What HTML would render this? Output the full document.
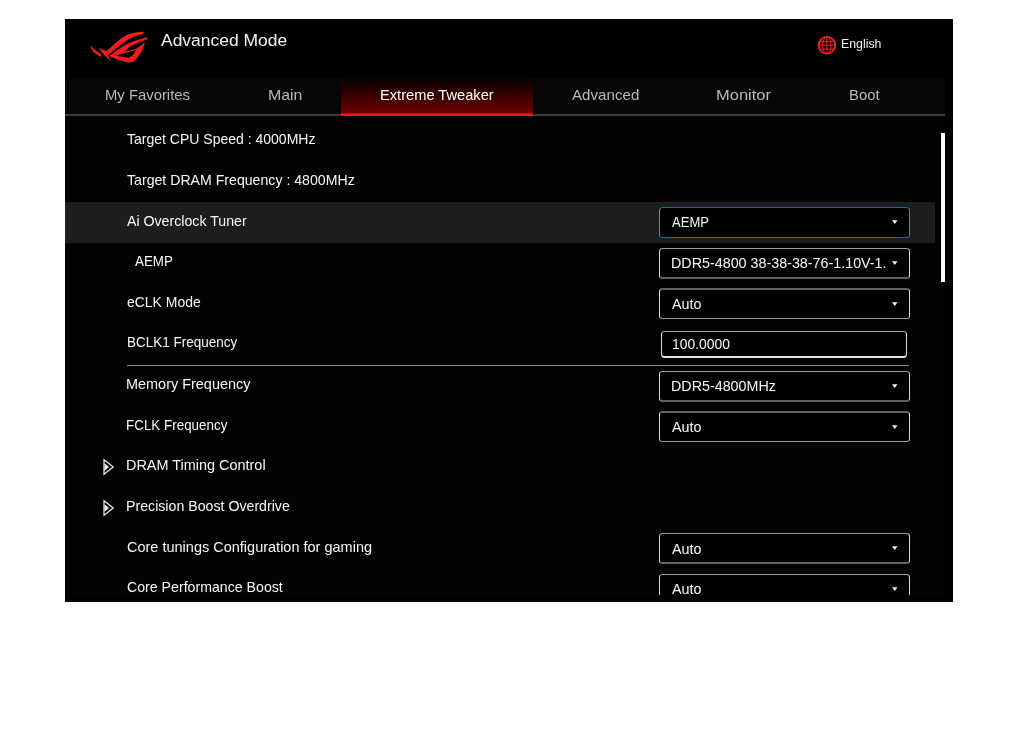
<!DOCTYPE html>
<html><head><meta charset="utf-8"><title>Advanced Mode</title>
<style>
html,body{margin:0;padding:0;background:#fff}
body{width:1024px;height:732px;position:relative;overflow:hidden;font-family:'Liberation Sans',sans-serif}
.a{position:absolute}
.t{position:absolute;white-space:pre;line-height:1;transform-origin:0 0}
.dd{position:absolute;left:659px;width:251px;height:30px;box-sizing:border-box;background:#000;
 border:1px solid #9a9a9a;border-left-color:#dcdcdc;border-right-color:#dcdcdc;border-radius:3.5px}
.dd.f{border-color:#0e6fa4;border-left-color:#1aa4d4;border-right-color:#1aa4d4}
.ar{position:absolute;left:892px;width:0;height:0;border-left:3px solid transparent;border-right:3px solid transparent;border-top:4px solid #f0f0f0}
</style></head><body>
<div class="a" style="left:65px;top:19px;width:888px;height:583px;background:#000"></div>
<div class="a" style="left:65px;top:116px;width:880px;height:480px;background:#030303"></div>
<div class="a" style="left:65px;top:77px;width:880px;height:37px;background:#060606"></div>
<div class="a" style="left:65px;top:114px;width:880px;height:2px;background:#3b3b3b"></div>
<div class="a" style="left:341px;top:77px;width:192px;height:39px;background:linear-gradient(to bottom,#060303 0%,#1c0000 22%,#420000 55%,#6c0000 92%)"></div>
<div class="a" style="left:341px;top:113px;width:192px;height:1px;background:#b00c0c"></div><div class="a" style="left:341px;top:114px;width:192px;height:2px;background:#f41818"></div>
<div class="a" style="left:65px;top:202px;width:870px;height:40.5px;background:#1d1d1d"></div>
<div class="a" style="left:941px;top:133px;width:4px;height:148.5px;background:#fff"></div>
<div class="a" style="left:127px;top:365px;width:782px;height:1px;background:#8c8c8c"></div>

<svg class="a" style="left:85px;top:25px" width="70" height="45" viewBox="0 0 1024 658">
<g fill="#f81a1a">
<path d="M312,385 C420,290 520,185 620,142 C700,115 790,105 862,100 L852,132 C760,150 680,182 610,228 C520,292 420,372 332,442 Z"/>
<path fill-rule="evenodd" d="M355,452 C470,370 560,300 640,265 C740,225 830,195 922,178 L900,212 L770,260 L665,312 L604,360 L594,388 L745,350 L862,268 L878,262 L832,380 L772,470 L702,540 L640,548 C540,525 440,490 355,452 Z M447,449 L580,410 L745,366 L705,440 L640,480 Z"/>
<path d="M200,333 L318,385 L336,446 L380,532 L282,442 Z"/>
<path d="M78,298 C125,345 180,392 244,434 L234,458 C150,432 92,372 78,298 Z"/>
</g></svg>

<svg class="a" style="left:817px;top:35px" width="20" height="20" viewBox="0 0 20 20">
<g fill="none" stroke="#f21c1c">
<circle cx="9.9" cy="10.2" r="8.35" stroke-width="1.8"/>
<ellipse cx="9.9" cy="10.2" rx="4.3" ry="8.3" stroke-width="1"/>
<path d="M9.9,1.5 V18.9 M1.5,10.2 H18.3 M2.4,6.6 H17.4 M2.4,14.1 H17.4" stroke-width="1"/>
</g></svg>

<div class="dd f" style="top:207px;height:31px;"></div>
<svg class="a" style="left:891px;top:219px" width="8" height="7"><path d="M1,1.35 L6.5,1.35 L3.75,5.1 Z" fill="#f4f4f4"/></svg>
<div class="dd" style="top:248px;height:31px;border-bottom:2px solid #626262;"></div>
<svg class="a" style="left:891px;top:260px" width="8" height="7"><path d="M1,1.35 L6.5,1.35 L3.75,5.1 Z" fill="#f4f4f4"/></svg>
<div class="dd" style="top:288px;height:31px;border-top:2px solid #626262;"></div>
<svg class="a" style="left:891px;top:301px" width="8" height="7"><path d="M1,1.35 L6.5,1.35 L3.75,5.1 Z" fill="#f4f4f4"/></svg>
<div class="dd" style="top:371px;height:31px;border-bottom:2px solid #626262;"></div>
<svg class="a" style="left:891px;top:383px" width="8" height="7"><path d="M1,1.35 L6.5,1.35 L3.75,5.1 Z" fill="#f4f4f4"/></svg>
<div class="dd" style="top:411px;height:31px;border-top:2px solid #626262;"></div>
<svg class="a" style="left:891px;top:424px" width="8" height="7"><path d="M1,1.35 L6.5,1.35 L3.75,5.1 Z" fill="#f4f4f4"/></svg>
<div class="dd" style="top:533px;height:31px;border-bottom:2px solid #626262;"></div>
<svg class="a" style="left:891px;top:545px" width="8" height="7"><path d="M1,1.35 L6.5,1.35 L3.75,5.1 Z" fill="#f4f4f4"/></svg>
<div class="dd" style="top:574px;height:31px;"></div>
<svg class="a" style="left:891px;top:586px" width="8" height="7"><path d="M1,1.35 L6.5,1.35 L3.75,5.1 Z" fill="#f4f4f4"/></svg>
<div class="a" style="left:661px;top:331px;width:246px;height:27px;box-sizing:border-box;background:#000;border:1px solid #9c9c9c;border-bottom:2px solid #e2e2e2;border-left-color:#d8d8d8;border-right-color:#d8d8d8;border-radius:3.5px"></div>
<div class="a" style="left:672px;top:250px;width:213.5px;height:26px;overflow:hidden;will-change:transform"><span class="t" id="long" style="left:-0.6px;top:5.94px;font-size:14.6px;color:#f7f7f7;transform:scaleX(0.9804)">DDR5-4800 38-38-38-76-1.10V-1.20V</span></div>
<svg class="a" style="left:101px;top:456.1px" width="16" height="22" viewBox="0 0 16 22"><path d="M3,3.7 L12.3,11 L3,18.3 Z" fill="none" stroke="#f0f0f0" stroke-width="1.2" stroke-linejoin="miter"/><path d="M3.5,7.3 L8,11 L3.5,14.7 Z" fill="#f0f0f0"/></svg>
<svg class="a" style="left:101px;top:497.0px" width="16" height="22" viewBox="0 0 16 22"><path d="M3,3.7 L12.3,11 L3,18.3 Z" fill="none" stroke="#f0f0f0" stroke-width="1.2" stroke-linejoin="miter"/><path d="M3.5,7.3 L8,11 L3.5,14.7 Z" fill="#f0f0f0"/></svg>
<div class="a" style="left:0;top:0;width:1024px;height:602px;will-change:transform">
<span class="t" style="left:160.9px;top:32.47px;font-size:17.4px;color:#f4f4f4;transform:scaleX(1.0038)">Advanced Mode</span>
<span class="t" style="left:841.4px;top:37.29px;font-size:13.6px;color:#f4f4f4;transform:scaleX(0.9071)">English</span>
<span class="t" style="left:104.7px;top:87.67px;font-size:14.8px;color:#b9b9b9;transform:scaleX(1.0033)">My Favorites</span>
<span class="t" style="left:267.7px;top:87.67px;font-size:14.8px;color:#b9b9b9;transform:scaleX(1.0717)">Main</span>
<span class="t" style="left:380.2px;top:87.67px;font-size:14.8px;color:#ffffff;transform:scaleX(0.9900)">Extreme Tweaker</span>
<span class="t" style="left:572.0px;top:87.67px;font-size:14.8px;color:#b9b9b9;transform:scaleX(1.0227)">Advanced</span>
<span class="t" style="left:716.1px;top:87.67px;font-size:14.8px;color:#b9b9b9;transform:scaleX(1.1129)">Monitor</span>
<span class="t" style="left:849.2px;top:87.67px;font-size:14.8px;color:#b9b9b9;transform:scaleX(1.0030)">Boot</span>
<span class="t" style="left:127.3px;top:132.44px;font-size:14.6px;color:#f7f7f7;transform:scaleX(0.9599)">Target CPU Speed : 4000MHz</span>
<span class="t" style="left:127.2px;top:172.94px;font-size:14.6px;color:#f7f7f7;transform:scaleX(0.9681)">Target DRAM Frequency : 4800MHz</span>
<span class="t" style="left:127.1px;top:213.64px;font-size:14.6px;color:#f7f7f7;transform:scaleX(0.9703)">Ai Overclock Tuner</span>
<span class="t" style="left:134.8px;top:253.94px;font-size:14.6px;color:#f7f7f7;transform:scaleX(0.9171)">AEMP</span>
<span class="t" style="left:126.7px;top:294.64px;font-size:14.6px;color:#f7f7f7;transform:scaleX(0.9567)">eCLK Mode</span>
<span class="t" style="left:126.5px;top:335.14px;font-size:14.6px;color:#f7f7f7;transform:scaleX(0.9248)">BCLK1 Frequency</span>
<span class="t" style="left:126.1px;top:377.14px;font-size:14.6px;color:#f7f7f7;transform:scaleX(0.9901)">Memory Frequency</span>
<span class="t" style="left:126.4px;top:417.64px;font-size:14.6px;color:#f7f7f7;transform:scaleX(0.9190)">FCLK Frequency</span>
<span class="t" style="left:126.3px;top:458.44px;font-size:14.6px;color:#f7f7f7;transform:scaleX(0.9894)">DRAM Timing Control</span>
<span class="t" style="left:126.4px;top:498.94px;font-size:14.6px;color:#f7f7f7;transform:scaleX(0.9711)">Precision Boost Overdrive</span>
<span class="t" style="left:126.5px;top:539.64px;font-size:14.6px;color:#f7f7f7;transform:scaleX(0.9936)">Core tunings Configuration for gaming</span>
<span class="t" style="left:126.7px;top:580.14px;font-size:14.6px;color:#f7f7f7;transform:scaleX(0.9699)">Core Performance Boost</span>
<span class="t" style="left:671.5px;top:215.44px;font-size:14.6px;color:#f7f7f7;transform:scaleX(0.8942)">AEMP</span>
<span class="t" style="left:671.9px;top:297.14px;font-size:14.6px;color:#f7f7f7;transform:scaleX(0.9793)">Auto</span>
<span class="t" style="left:672.3px;top:337.24px;font-size:14.6px;color:#f7f7f7;transform:scaleX(0.9510)">100.0000</span>
<span class="t" style="left:671.1px;top:378.94px;font-size:14.6px;color:#f7f7f7;transform:scaleX(0.9799)">DDR5-4800MHz</span>
<span class="t" style="left:671.9px;top:419.64px;font-size:14.6px;color:#f7f7f7;transform:scaleX(0.9793)">Auto</span>
<span class="t" style="left:671.9px;top:541.64px;font-size:14.6px;color:#f7f7f7;transform:scaleX(0.9793)">Auto</span>
<span class="t" style="left:671.9px;top:581.84px;font-size:14.6px;color:#f7f7f7;transform:scaleX(0.9793)">Auto</span>
</div>
<div class="a" style="left:65px;top:595px;width:888px;height:7px;background:#000"></div>
<div class="a" style="left:0;top:602px;width:1024px;height:130px;background:#fff"></div>
</body></html>
